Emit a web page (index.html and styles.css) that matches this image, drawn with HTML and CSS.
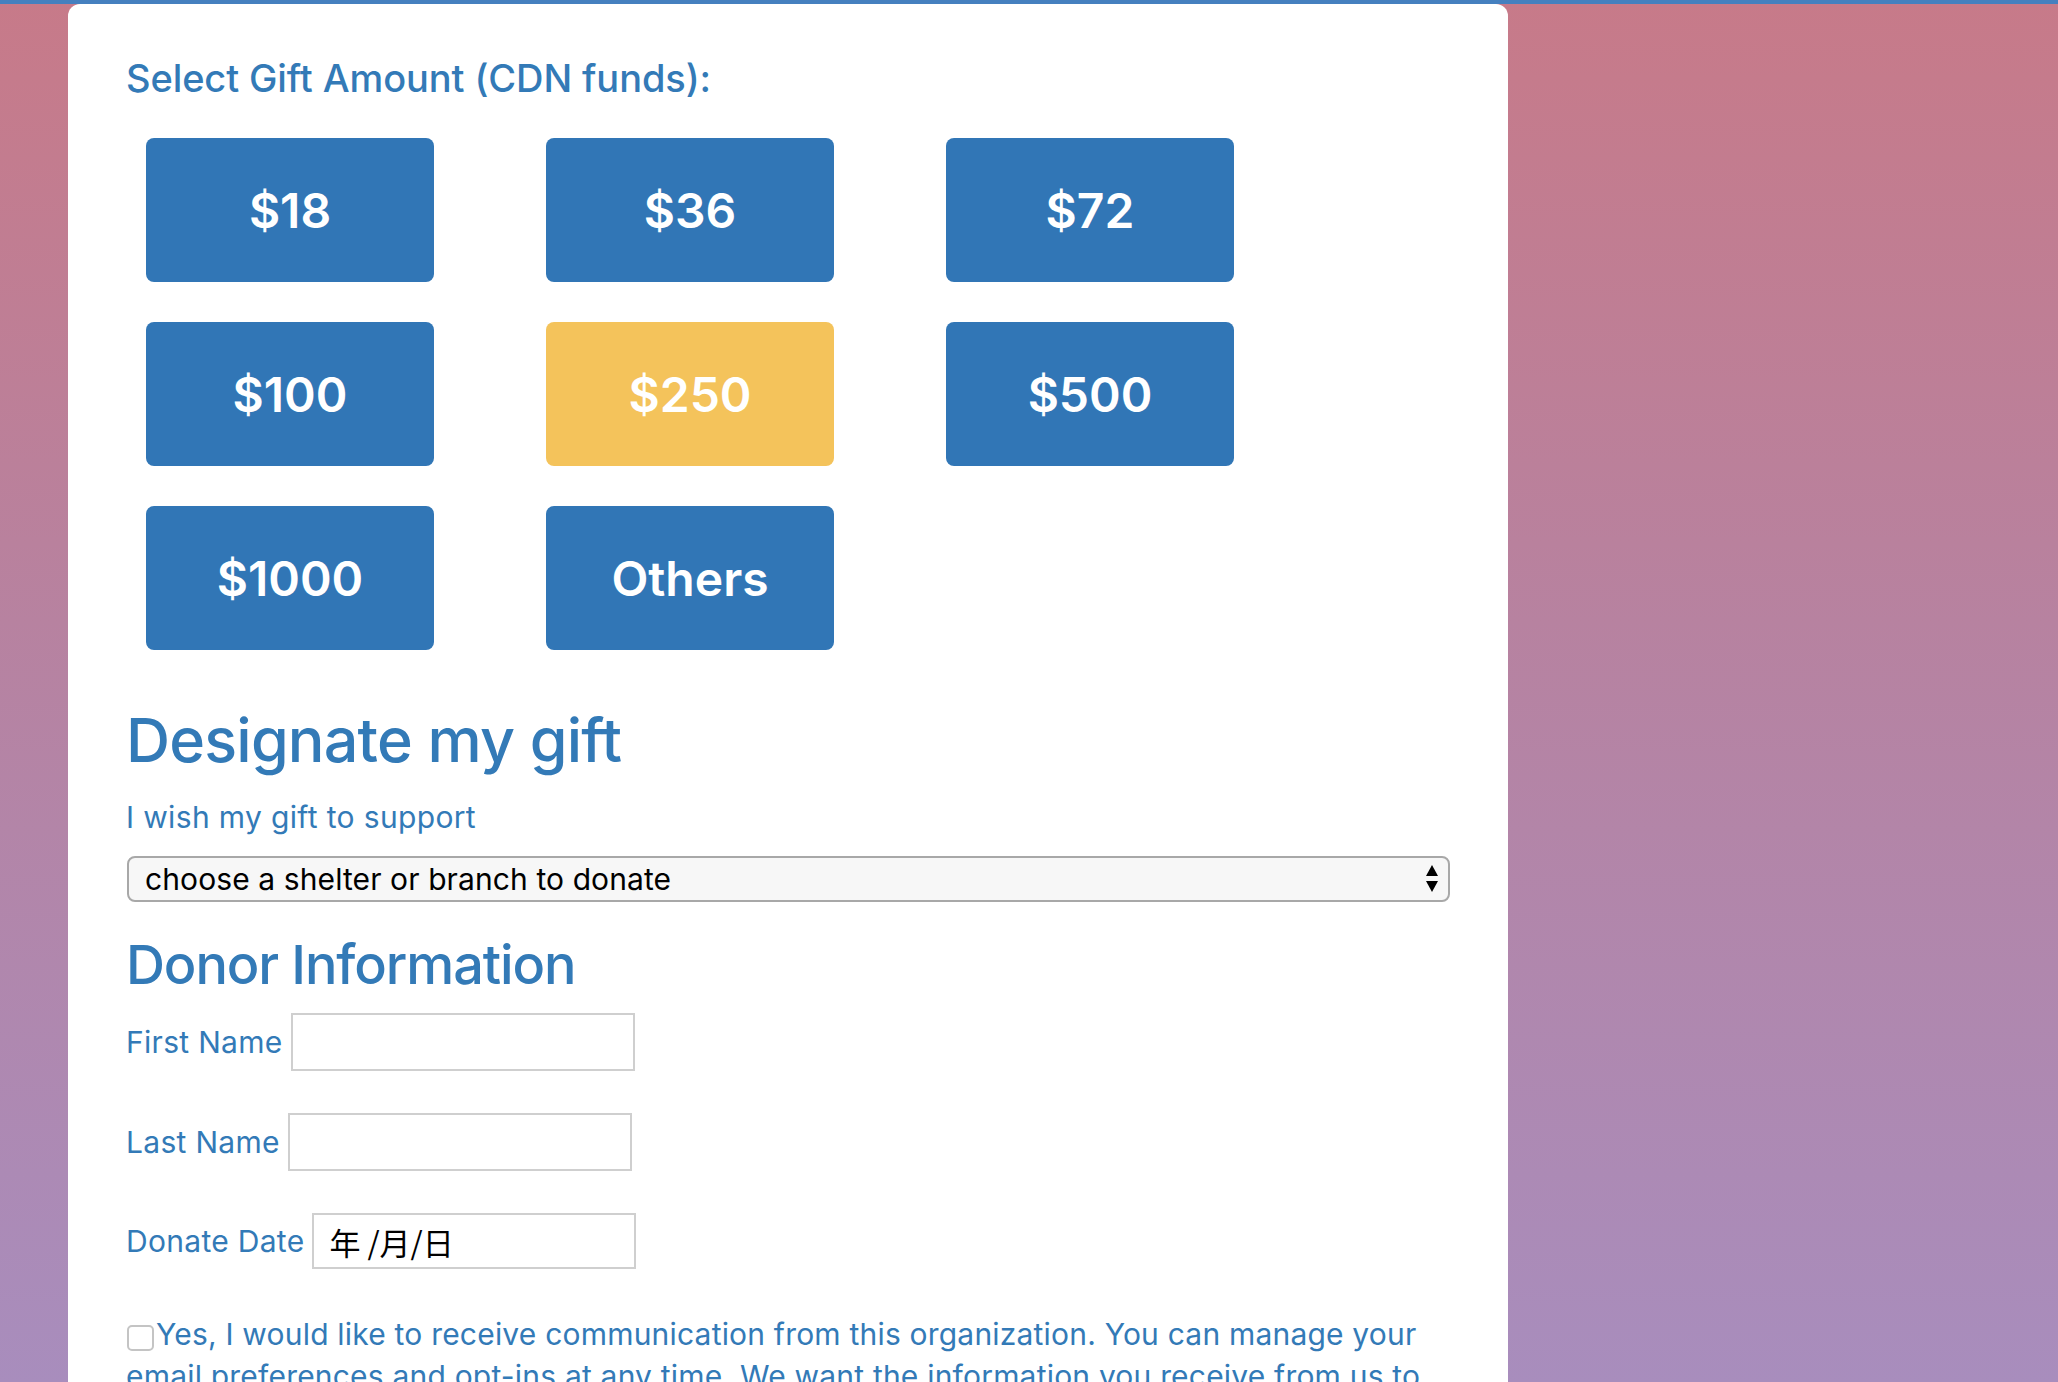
FILE: index.html
```html
<!DOCTYPE html>
<html lang="en">
<head>
<meta charset="utf-8">
<title>Donate</title>
<link rel="stylesheet" href="styles.css">
</head>
<body>
<div class="topbar"></div>
<main class="card">
  <h4 class="amount-title">Select Gift Amount (CDN funds):</h4>
  <div class="amounts">
    <button class="amt">$18</button>
    <button class="amt">$36</button>
    <button class="amt">$72</button>
    <button class="amt">$100</button>
    <button class="amt active">$250</button>
    <button class="amt">$500</button>
    <button class="amt">$1000</button>
    <button class="amt">Others</button>
  </div>

  <h2 class="designate">Designate my gift</h2>
  <p class="support">I wish my gift to support</p>
  <div class="select">
    <span class="select-text">choose a shelter or branch to donate</span>
    <svg class="select-arrows" width="14" height="28" viewBox="0 0 14 28">
      <path d="M7 0 L13 11 L1 11 Z" fill="#000"/>
      <path d="M1 16 L13 16 L7 27 Z" fill="#000"/>
    </svg>
  </div>

  <h2 class="donor">Donor Information</h2>
  <div class="field">
    <label class="field-label">First Name</label>
    <div class="input"></div>
  </div>
  <div class="field">
    <label class="field-label">Last Name</label>
    <div class="input"></div>
  </div>
  <div class="field">
    <label class="field-label">Donate Date</label>
    <div class="input date"><span>年 /月/日</span></div>
  </div>

  <p class="consent"><input type="checkbox" class="check">Yes, I would like to receive communication from this organization. You can manage your email preferences and opt-ins at any time. We want the information you receive from us to be relevant and useful to you.</p>
</main>
</body>
</html>
```

FILE: styles.css
```css
html, body {
  margin: 0;
  padding: 0;
  height: 1382px;
  overflow: hidden;
}

body {
  background: linear-gradient(180deg, #c77a89 0%, #b782a0 45%, #a88dbd 100%);
  font-family: Inter, "Noto Sans", sans-serif;
  color: #337ab7;
}

.topbar {
  height: 4px;
  background: #4580bf;
}

.card {
  margin-left: 68px;
  width: 1440px;
  box-sizing: border-box;
  min-height: 1400px;
  background: #fff;
  border-radius: 12px 12px 0 0;
  padding: 51px 58px 0 58px;
}

.amount-title {
  margin: 0;
  font-size: 38px;
  line-height: 46px;
  font-weight: 500;
  letter-spacing: -0.1px;
  color: #337ab7;
}

.amounts {
  margin: 37px 0 0 20px;
  display: grid;
  grid-template-columns: repeat(3, 288px);
  column-gap: 112px;
  row-gap: 40px;
}

.amt {
  height: 144px;
  border: none;
  border-radius: 8px;
  background: #3176b6;
  color: #fff;
  font-family: Inter, "Noto Sans", sans-serif;
  font-size: 48px;
  font-weight: 600;
  padding: 0;
  cursor: pointer;
}

.amt.active {
  background: #f4c35b;
}

.designate {
  margin: 53px 0 0 0;
  font-size: 61px;
  line-height: 75px;
  font-weight: 500;
  letter-spacing: -0.8px;
}

.support {
  margin: 21px 0 0 0;
  font-size: 30px;
  line-height: 36px;
  letter-spacing: 0.35px;
}

.select {
  margin-top: 21px;
  margin-left: 1px;
  height: 46px;
  box-sizing: border-box;
  border: 2px solid #a8a8a8;
  border-radius: 8px;
  background: #f7f7f7;
  display: flex;
  align-items: center;
  justify-content: space-between;
  padding: 0 9px 0 16px;
}

.select-text {
  color: #000;
  font-size: 30px;
  line-height: 34px;
  letter-spacing: 0.1px;
}

.select-arrows {
  display: block;
}

.donor {
  margin: 30px 0 0 0;
  font-size: 54px;
  line-height: 65px;
  font-weight: 500;
  letter-spacing: -1.1px;
}

.field {
  display: flex;
  align-items: center;
  margin-top: 42px;
}

.donor + .field {
  margin-top: 16px;
}

.field-label {
  font-size: 30px;
  line-height: 36px;
  letter-spacing: 0.3px;
  margin-right: 8px;
}

.input {
  width: 344px;
  height: 58px;
  box-sizing: border-box;
  border: 2px solid #cfcfcf;
  background: #fff;
}

.input.date {
  width: 324px;
  height: 56px;
  display: flex;
  align-items: center;
  padding-left: 15px;
  color: #000;
  font-family: "Noto Sans CJK SC", Inter, sans-serif;
  font-size: 31px;
}

.consent {
  margin: 44px 0 0 0;
  font-size: 30px;
  line-height: 42px;
  letter-spacing: 0.2px;
}

.check {
  appearance: none;
  -webkit-appearance: none;
  width: 27px;
  height: 26px;
  margin: 0 2px 0 1px;
  border: 2px solid #c4c4c4;
  border-radius: 5px;
  background: #fff;
  vertical-align: -6px;
}
```
